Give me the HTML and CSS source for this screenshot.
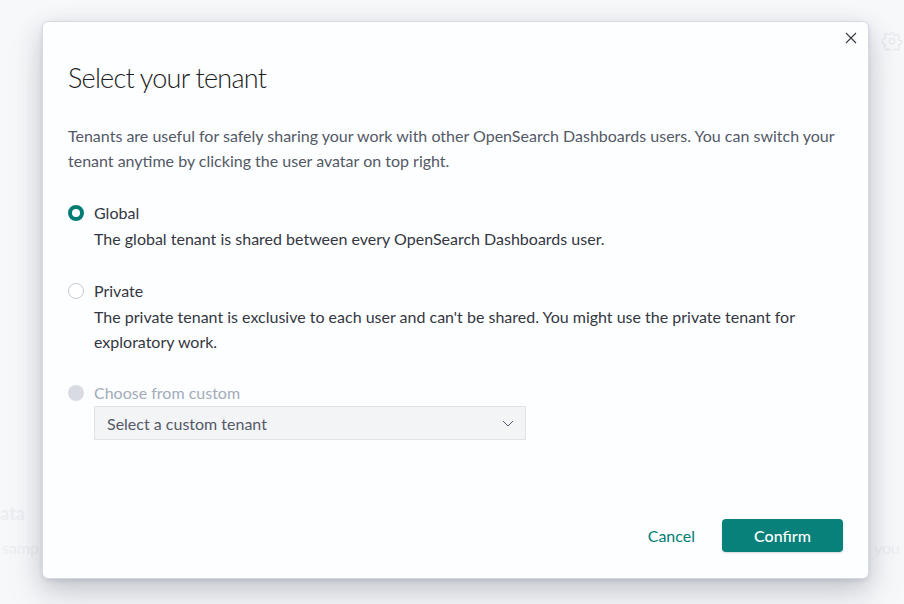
FILE: index.html
```html
<!DOCTYPE html>
<html>
<head>
<meta charset="utf-8">
<link rel="stylesheet" href="styles.css">
</head>
<body>
<div class="page">
  <div class="bg-gear">
    <svg width="20" height="20" viewBox="0 0 16 16" fill="none" stroke="#e6e9ee" stroke-width="1"><circle cx="8" cy="8" r="2.2"/><path d="M6.8 1.5h2.4l.4 1.8 1.3.6 1.6-1 1.7 1.7-1 1.6.6 1.3 1.8.4v2.4l-1.8.4-.6 1.3 1 1.6-1.7 1.7-1.6-1-1.3.6-.4 1.8H6.8l-.4-1.8-1.3-.6-1.6 1-1.7-1.7 1-1.6-.6-1.3-1.8-.4V6.8l1.8-.4.6-1.3-1-1.6 1.7-1.7 1.6 1 1.3-.6z"/></svg>
  </div>
  <div class="bg-title">ata</div>
  <div class="bg-text">samp</div>
  <div class="bg-text-r">you</div>
</div>
<div class="overlay">
  <div class="modal">
    <button class="close" aria-label="Close">
      <svg width="12" height="12" viewBox="0 0 12 12"><path d="M1 1l10 10M11 1L1 11" stroke="#343741" stroke-width="1.1"/></svg>
    </button>
    <h1 class="title">Select your tenant</h1>
    <p class="intro">Tenants are useful for safely sharing your work with other OpenSearch Dashboards users. You can switch your tenant anytime by clicking the user avatar on top right.</p>
    <div class="options">
      <div class="option">
        <span class="radio checked"></span>
        <div class="opt-body">
          <div class="opt-label">Global</div>
          <div class="opt-desc">The global tenant is shared between every OpenSearch Dashboards user.</div>
        </div>
      </div>
      <div class="option">
        <span class="radio"></span>
        <div class="opt-body">
          <div class="opt-label">Private</div>
          <div class="opt-desc">The private tenant is exclusive to each user and can't be shared. You might use the private tenant for exploratory work.</div>
        </div>
      </div>
      <div class="option disabled">
        <span class="radio disabled-radio"></span>
        <div class="opt-body">
          <div class="opt-label">Choose from custom</div>
          <div class="select">
            <span>Select a custom tenant</span>
            <svg width="14" height="14" viewBox="0 0 14 14"><path d="M2 5l5 5 5-5" fill="none" stroke="#535966" stroke-width="1"/></svg>
          </div>
        </div>
      </div>
    </div>
    <div class="footer">
      <button class="btn-cancel">Cancel</button>
      <button class="btn-confirm">Confirm</button>
    </div>
  </div>
</div>
</body>
</html>
```
FILE: styles.css
```css
* { box-sizing: border-box; }
html, body { margin: 0; padding: 0; }
body {
  width: 904px;
  height: 604px;
  overflow: hidden;
  background: #f7f8fa;
  font-family: Lato, "Liberation Sans", sans-serif;
  color: #343741;
  position: relative;
}
.page { position: absolute; inset: 0; }
.bg-gear { position: absolute; left: 882px; top: 31px; }
.bg-title { position: absolute; left: 0; top: 502px; font-weight: 700; font-size: 18px; color: #eceef2; }
.bg-text { position: absolute; left: 2px; top: 538px; font-size: 16px; color: #eceef2; }
.bg-text-r { position: absolute; left: 874px; top: 538px; font-size: 16px; color: #eceef2; }

.overlay {
  position: absolute;
  inset: 0;
  padding: 21px 0 0 42px;
}
.modal {
  position: relative;
  width: 827px;
  height: 558px;
  background: #fdfeff;
  border: 1px solid #d3dae6;
  border-radius: 6px;
  box-shadow: 0 2px 4px rgba(0,0,0,0.08), 0 8px 24px rgba(60,70,90,0.22), 0 20px 40px rgba(60,70,90,0.10);
  padding: 38px 25px 26px 25px;
  display: flex;
  flex-direction: column;
}
.close {
  position: absolute;
  right: 9px;
  top: 8px;
  width: 16px;
  height: 16px;
  padding: 0;
  border: 0;
  background: none;
  display: flex;
  align-items: center;
  justify-content: center;
}
.title {
  margin: 0;
  font-weight: 300;
  font-size: 27px;
  line-height: 36px;
  letter-spacing: -0.75px;
  color: #1a1c21;
}
.intro {
  margin: 27px 0 0 0;
  font-size: 16px;
  line-height: 25px;
  color: #535966;
}
.options {
  margin-top: 27px;
  display: flex;
  flex-direction: column;
  gap: 27px;
}
.option { display: flex; gap: 10px; }
.option.disabled { margin-top: -1px; }
.radio {
  flex: none;
  width: 16px;
  height: 16px;
  margin-top: 5px;
  border-radius: 50%;
  border: 1px solid #c6cbd3;
  background: #fff;
}
.radio.checked {
  border: 4.5px solid #017d73;
  background: #fff;
}
.radio.disabled-radio {
  border: 0;
  background: #d8dce2;
}
.opt-label { font-size: 16px; line-height: 26px; }
.opt-desc { font-size: 16px; line-height: 25px; color: #343741; }
.disabled .opt-label { color: #a2abba; }
.select {
  margin-top: 0;
  width: 432px;
  height: 34px;
  background: #f3f4f6;
  border: 1px solid #dfe3e8;
  display: flex;
  align-items: center;
  justify-content: space-between;
  padding: 0 10px 0 12px;
  font-size: 16px;
  color: #535966;
}
.footer {
  margin-top: auto;
  display: flex;
  justify-content: flex-end;
  align-items: center;
  gap: 17px;
}
.btn-cancel {
  border: 0;
  background: none;
  font-family: inherit;
  font-size: 16px;
  color: #017d73;
  padding: 0 10px;
  height: 33px;
}
.btn-confirm {
  width: 121px;
  height: 33px;
  border: 0;
  border-radius: 4px;
  background: #07817a;
  color: #fff;
  font-family: inherit;
  font-size: 16px;
  font-weight: 500;
  box-shadow: 0 1px 2px rgba(0,0,0,0.15);
}
```
